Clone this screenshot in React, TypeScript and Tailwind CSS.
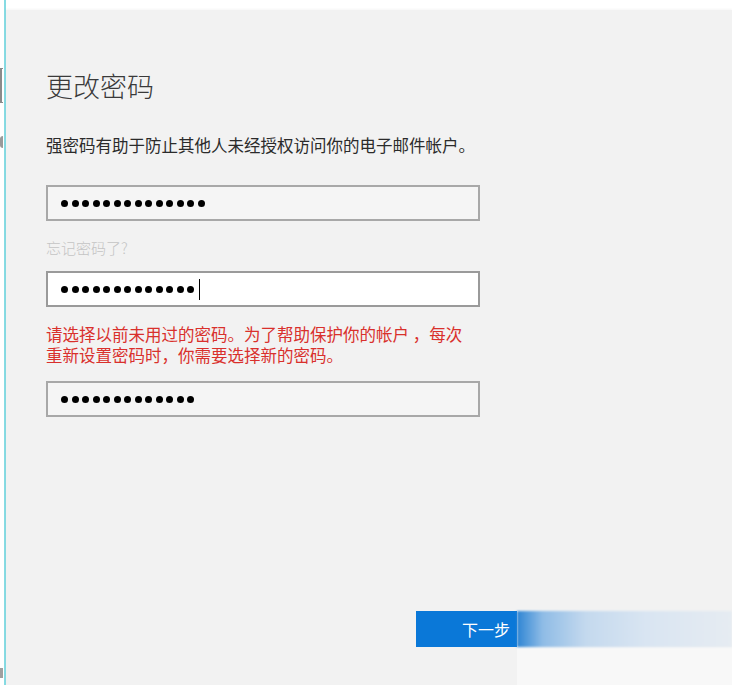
import React from "react";

const font = { fontFamily: '"Noto Sans CJK SC", "Noto Sans", sans-serif' };

function Dots({ count, cursor }: { count: number; cursor?: boolean }) {
  return (
    <div className="flex items-center gap-[3.5px]">
      {Array.from({ length: count }).map((_, i) => (
        <span key={i} className="block h-[7px] w-[7px] rounded-full bg-black" />
      ))}
      {cursor && <span className="ml-[1px] block h-[21px] w-[1.5px] bg-black" />}
    </div>
  );
}

function PasswordBox({
  count,
  focused,
  cursor,
}: {
  count: number;
  focused?: boolean;
  cursor?: boolean;
}) {
  return (
    <div
      className={`flex h-[36px] w-[434px] items-center border-2 pl-[13px] ${
        focused ? "border-[#9a9a9a] bg-white" : "border-[#a8a8a8] bg-[#f5f5f5]"
      }`}
    >
      <Dots count={count} cursor={cursor} />
    </div>
  );
}

export default function App() {
  return (
    <div className="flex h-[692px] w-[732px] flex-col bg-white" style={font}>
      <div className="flex h-[685px]">
        {/* left gutter with bits of the window behind */}
        <div className="flex w-[4px] flex-col">
          <div className="mt-[68px] h-[35px] w-[3px] border-y border-l-2 border-[#8a8a8a]" />
          <div className="mt-[33px] h-[12px] w-[3px] rounded-l-full bg-[#9a9a9a]" />
          <div className="mb-[7px] mt-auto h-[10px] w-[3px] bg-[#a0a0a0]" />
        </div>
        <div className="w-[2px] bg-[#86dbe3]" />

        <div className="flex flex-1 flex-col">
          <div className="h-[10px] bg-white" />
          <div className="flex flex-1 flex-col bg-[#f2f2f2] shadow-[0_-1px_2px_rgba(0,0,0,0.04)]">
            <div className="flex flex-col pl-[40px] pt-[58px]">
              <h1 className="text-[27px] font-light leading-[35px] text-[#3a3a3a]">
                更改密码
              </h1>
              <p className="mt-[32px] text-[16.5px] leading-[20px] text-[#2b2b2b]">
                强密码有助于防止其他人未经授权访问你的电子邮件帐户。
              </p>

              <div className="mt-[30px]">
                <PasswordBox count={14} />
              </div>
              <div className="mt-[17px] text-[15px] font-light leading-[20px] text-[#c4c4c4]">
                忘记密码了?
              </div>

              <div className="mt-[13px]">
                <PasswordBox count={13} focused cursor />
              </div>
              <div className="mt-[17px] flex flex-col text-[16.5px] leading-[21px] text-[#d9302c]">
                <span>请选择以前未用过的密码。为了帮助保护你的帐户 ，每次</span>
                <span>重新设置密码时，你需要选择新的密码。</span>
              </div>

              <div className="mt-[15px]">
                <PasswordBox count={13} />
              </div>
            </div>

            <div className="mt-auto flex pl-[410px]">
              <div className="flex h-[36px] w-[101px] items-center justify-end bg-[#0a78d8] pr-[7px] text-[16px] text-white">
                下一步
              </div>
              <div className="flex flex-1 flex-col">
                <div className="h-[36px] bg-[linear-gradient(90deg,#2f86d4_0%,#8fbce6_12%,#c4d9ee_32%,#d9e5f2_60%,#e6ecf2_100%)] blur-[1px]" />
              </div>
            </div>
            <div className="flex h-[38px]">
              <div className="w-[511px]" />
              <div className="flex-1 bg-[#f8f8f8]" />
            </div>
          </div>
        </div>
      </div>
      <div className="h-[7px] bg-white" />
    </div>
  );
}
